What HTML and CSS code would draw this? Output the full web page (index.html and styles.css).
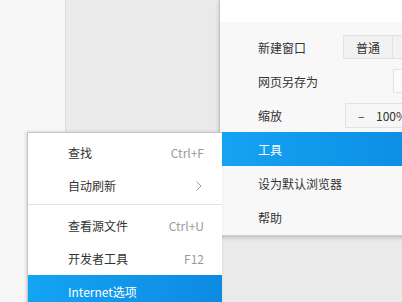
FILE: index.html
```html
<!DOCTYPE html>
<html lang="zh-CN">
<head>
<meta charset="utf-8">
<title>菜单</title>
<link rel="stylesheet" href="styles.css">
</head>
<body>
<div class="desk">
  <div class="side"></div>
  <div class="canvas"></div>
</div>

<div class="menu">
  <div class="menu-head"></div>
  <div class="menu-body">
    <div class="row">
      <span class="label">新建窗口</span>
      <div class="seg">
        <span class="seg-btn">普通</span>
        <span class="seg-btn seg-next"></span>
      </div>
    </div>
    <div class="row">
      <span class="label">网页另存为</span>
      <span class="save-box"></span>
    </div>
    <div class="row">
      <span class="label">缩放</span>
      <span class="zoom-box"><span class="minus">–</span><span class="pct">100%</span></span>
    </div>
    <div class="row active">
      <span class="label">工具</span>
    </div>
    <div class="row">
      <span class="label">设为默认浏览器</span>
    </div>
    <div class="row">
      <span class="label">帮助</span>
    </div>
  </div>
</div>

<div class="submenu">
  <div class="sub-row"><span>查找</span><span class="key">Ctrl+F</span></div>
  <div class="sub-row"><span>自动刷新</span><svg class="chev" width="6" height="10" viewBox="0 0 6 10"><polyline points="0.5,0.5 5,5 0.5,9.5" fill="none" stroke="#9a9a9a" stroke-width="1"/></svg></div>
  <div class="sep"></div>
  <div class="sub-row"><span>查看源文件</span><span class="key">Ctrl+U</span></div>
  <div class="sub-row"><span>开发者工具</span><span class="key">F12</span></div>
  <div class="sub-row active"><span>Internet选项</span></div>
</div>
</body>
</html>
```

FILE: styles.css
```css
html, body {
  margin: 0;
  padding: 0;
}
body {
  width: 402px;
  height: 302px;
  overflow: hidden;
  position: relative;
  font-family: "Noto Sans CJK SC", "Microsoft YaHei", sans-serif;
  font-size: 12px;
  color: #333;
}
.desk {
  display: flex;
  height: 302px;
}
.side {
  width: 65px;
  background: #f7f7f7;
  border-right: 1px solid #dedede;
}
.canvas {
  flex: 1;
  background: #eaeaea;
}

/* main menu */
.menu {
  position: absolute;
  left: 219px;
  top: 0;
  width: 200px;
  background: #f8f8f8;
  border-left: 1px solid #c4c4c4;
  border-bottom: 1px solid #d0d0d0;
  box-shadow: 0 2px 4px rgba(0,0,0,0.18);
}
.menu-head {
  height: 22px;
  background: #fff;
}
.menu-body {
  padding: 8px 0 1px;
}
.row {
  height: 34px;
  display: flex;
  align-items: center;
  padding-left: 38px;
}
.row .label {
  width: 85px;
  flex: none;
}
.row.active {
  background: linear-gradient(to right, #16a3f3, #0b8de3);
  color: #fff;
}
.seg {
  display: flex;
}
.seg-btn {
  width: 48px;
  height: 22px;
  border: 1px solid #e2e2e2;
  background: #f2f2f2;
  display: flex;
  align-items: center;
  justify-content: center;
  color: #333;
}
.seg-next {
  border-left: none;
}
.save-box {
  margin-left: 50px;
  width: 30px;
  height: 22px;
  border: 1px solid #e2e2e2;
  background: #fbfbfb;
}
.zoom-box {
  margin-left: 2px;
  width: 70px;
  height: 23px;
  border: 1px solid #e2e2e2;
  background: #f6f6f6;
  display: flex;
  align-items: center;
  color: #333;
}
.minus {
  margin-left: 12px;
  width: 18px;
}
.pct {
  margin-left: 0;
}

/* sub menu */
.submenu {
  position: absolute;
  left: 27px;
  top: 132px;
  width: 195px;
  box-sizing: border-box;
  background: #fff;
  border: 1px solid #c6c6c6;
  border-right: none;
  box-shadow: -1px 0 3px rgba(0,0,0,0.15);
  padding-top: 3px;
  z-index: 2;
}
.sub-row {
  height: 33px;
  display: flex;
  align-items: center;
  justify-content: space-between;
  padding: 0 18px 0 40px;
}
.sub-row .key {
  color: #9a9a9a;
}
.chev {
  margin-right: 2px;
}
.sub-row.active {
  background: linear-gradient(to right, #14a4f4, #0d8ae2);
  color: #fff;
}
.sep {
  height: 1px;
  background: #e3e3e3;
  margin: 2px 0 4px;
}
```
